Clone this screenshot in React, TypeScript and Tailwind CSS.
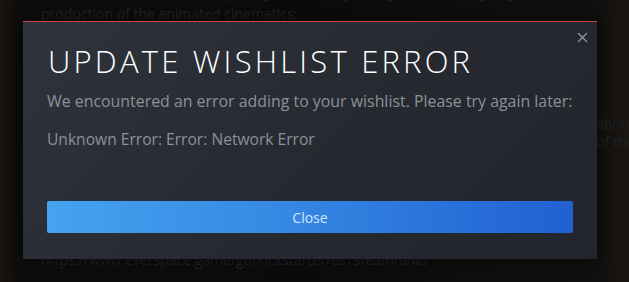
import React from 'react';

const bodyFont = { fontFamily: '"Open Sans", "Noto Sans", Arial, sans-serif' };

function CloseIcon() {
  return (
    <svg width="11" height="11" viewBox="0 0 11 11" fill="none">
      <path d="M1 1L10 10M10 1L1 10" stroke="#8d9ba2" strokeWidth="1.3" />
    </svg>
  );
}

function PageBehind() {
  return (
    <div className="flex h-full flex-col pl-[41px] text-[14px] leading-[18px] text-[#202124]">
      <p className="-mt-[17px] whitespace-nowrap">
        Our team worked on the ship designs, the story telling and the designing of the
      </p>
      <p className="mt-[4px] whitespace-nowrap">production of the animated cinematics:</p>
      <div className="mt-[92px] flex flex-col pl-[555px]">
        <p className="whitespace-nowrap">about</p>
        <p className="whitespace-nowrap">of the</p>
      </div>
      <p className="mt-[100px] whitespace-nowrap">https://www.everspace.game/go/kickstarter/es1steamnews</p>
    </div>
  );
}

export default function App() {
  return (
    <div
      className="relative h-[282px] w-[629px] overflow-hidden bg-[linear-gradient(to_right,#1b1511_0px,#0e0d0d_16px,#0b0b0c_300px,#12100e_600px,#1a1612_629px)]"
      style={bodyFont}
    >
      <PageBehind />

      <div className="absolute left-[23px] top-[21px] flex h-[238px] w-[574px] flex-col border-t border-[#c2473f] bg-[linear-gradient(135deg,#2f333b_0%,#262930_55%,#22252c_100%)] px-[24px] shadow-[0_0_12px_rgba(0,0,0,0.6)]">
        <button className="absolute right-[9px] top-[10px] p-0">
          <CloseIcon />
        </button>

        <h1 className="mt-[19px] whitespace-nowrap pl-[1px] text-[31px] font-light leading-[40px] tracking-[3.2px] text-white">
          UPDATE WISHLIST ERROR
        </h1>
        <p className="mt-[9px] whitespace-nowrap text-[15.9px] leading-[22px] text-[#8b9199]">
          We encountered an error adding to your wishlist. Please try again later:
        </p>
        <p className="mt-[16px] whitespace-nowrap text-[15.6px] leading-[22px] text-[#8b9199]">
          Unknown Error: Error: Network Error
        </p>

        <button className="mt-[51px] flex h-[32px] w-full items-center justify-center rounded-[2px] bg-[linear-gradient(to_right,#45a3f0_0%,#3588e3_45%,#2260d2_100%)] text-[14px] text-[#d4e6fb]">
          Close
        </button>
      </div>
    </div>
  );
}
